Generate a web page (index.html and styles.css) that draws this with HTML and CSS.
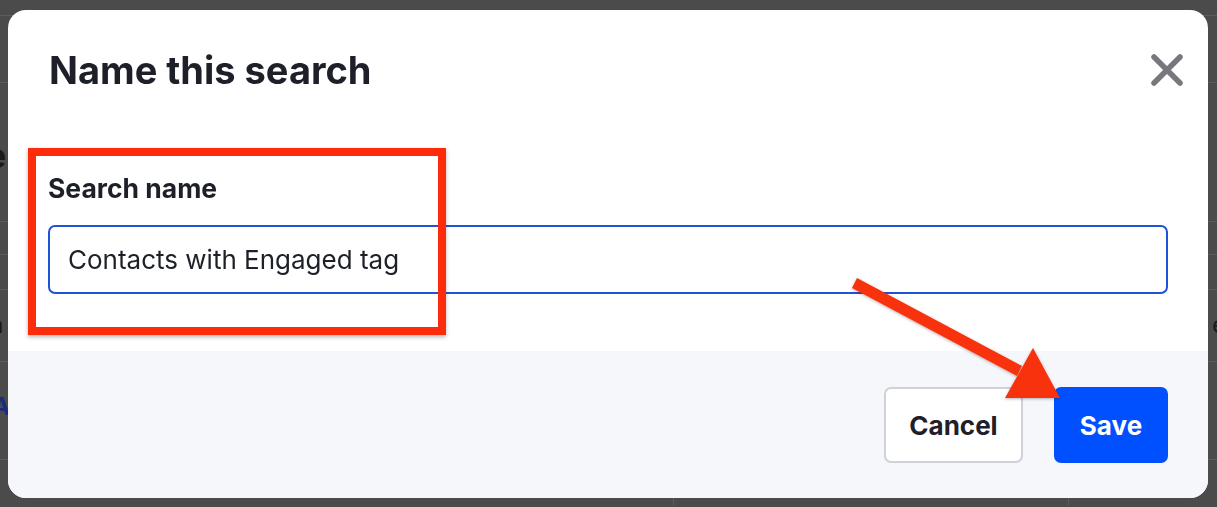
FILE: index.html
```html
<!DOCTYPE html>
<html lang="en">
<head>
    <meta charset="UTF-8">
    <title>Name this search</title>
    <link rel="stylesheet" href="styles.css">
</head>
<body>
    <div class="page">
        <div class="row r1"></div>
        <div class="row r2"></div>
        <div class="row r3"><span class="edge-l big">e</span></div>
        <div class="row r4"></div>
        <div class="row r5"></div>
        <div class="row r6"><span class="edge-l">a</span><span class="edge-r">e</span></div>
        <div class="row r7"><span class="edge-l link">A</span></div>
        <div class="row r8"><span class="col c1"></span><span class="col c2"></span></div>
    </div>

    <div class="modal">
        <div class="modal-head">
            <h2>Name this search</h2>
            <button class="close" aria-label="Close">
                <svg width="34" height="34" viewBox="0 0 34 34">
                    <path d="M4 4 L30 30 M30 4 L4 30" stroke="#77787d" stroke-width="5.5" stroke-linecap="round" fill="none"/>
                </svg>
            </button>
        </div>
        <div class="modal-body">
            <label for="searchName">Search name</label>
            <input id="searchName" type="text" value="Contacts with Engaged tag">
        </div>
        <div class="modal-foot">
            <button class="btn btn-cancel">Cancel</button>
            <button class="btn btn-save">Save</button>
        </div>

        <!-- annotations drawn over the dialog -->
        <div class="mark-box"></div>
        <svg class="mark-arrow" width="1200" height="488" viewBox="0 0 1200 488">
            <defs>
                <filter id="shadow" x="-10%" y="-10%" width="120%" height="120%">
                    <feDropShadow dx="0" dy="1" stdDeviation="1.5" flood-color="#000" flood-opacity="0.3"/>
                </filter>
            </defs>
            <g filter="url(#shadow)" fill="#f8300f">
                <path d="M849 268 L1014 356 L1009 366 L844 278 Z"/>
                <path d="M1052 388 L997 388 L1025 338 Z"/>
            </g>
        </svg>
    </div>
</body>
</html>
```

FILE: styles.css
```css
body {
    margin: 0;
    background: #4b4b4c;
    font-family: Inter, "Open Sans", sans-serif;
    overflow: hidden;
}

.page {
    height: 507px;
}

.row {
    position: relative;
    border-bottom: 1px solid #5c5c5e;
    color: #1a1a1a;
}

.r1 { height: 15px; }
.r2 { height: 66px; }
.r3 { height: 138px; }
.r4 { height: 32px; }
.r5 { height: 34px; }
.r6 { height: 71px; }
.r7 { height: 97px; }
.r8 { height: 46px; border-bottom: none; }

.edge-l, .edge-r {
    position: absolute;
    font-size: 24px;
}

.edge-l { left: -10px; }
.edge-r { right: -9px; }

.r3 .edge-l { top: 52px; left: -14px; font-size: 34px; font-weight: 700; }
.r6 .edge-l, .r6 .edge-r { top: 20px; }
.r7 .edge-l { top: 30px; font-weight: 700; color: #1b2a7a; left: -8px; }

.col {
    position: absolute;
    top: 0;
    bottom: 0;
    border-left: 1px solid #5c5c5e;
}

.c1 { left: 673px; }
.c2 { left: 1068px; }

.modal {
    position: fixed;
    left: 8px;
    top: 10px;
    width: 1200px;
    height: 488px;
    background: #fff;
    border-radius: 18px;
    display: flex;
    flex-direction: column;
    overflow: hidden;
}

.modal-head {
    display: flex;
    justify-content: space-between;
    align-items: center;
    padding: 37px 24px 0 41px;
}

.modal-head h2 {
    margin: 0;
    font-size: 38px;
    font-weight: 700;
    color: #1e2029;
}

.close {
    background: none;
    border: none;
    padding: 0;
    width: 34px;
    height: 34px;
}

.modal-body {
    flex: 1;
    display: flex;
    flex-direction: column;
    padding: 79px 40px 0 40px;
}

.modal-body label {
    font-size: 26.5px;
    font-weight: 700;
    color: #1e2029;
    margin-bottom: 21px;
}

.modal-body input {
    height: 69px;
    box-sizing: border-box;
    border: 2px solid #1f52d6;
    border-radius: 7px;
    padding: 0 18px;
    font-family: inherit;
    font-size: 26px;
    color: #1e2029;
    outline: none;
}

.modal-foot {
    height: 147px;
    box-sizing: border-box;
    background: #f6f7fb;
    display: flex;
    justify-content: flex-end;
    align-items: flex-start;
    gap: 31px;
    padding: 36px 40px 0 0;
}

.btn {
    height: 76px;
    border-radius: 7px;
    font-family: inherit;
    font-size: 26px;
    font-weight: 700;
    cursor: pointer;
}

.btn-cancel {
    width: 139px;
    background: #fff;
    color: #1e2029;
    border: 2px solid #cfd1d8;
}

.btn-save {
    width: 114px;
    background: #0050ff;
    color: #fff;
    border: none;
}

.mark-box {
    position: absolute;
    left: 20px;
    top: 138px;
    width: 418px;
    height: 187px;
    box-sizing: border-box;
    border: 8px solid #fb2b0b;
    box-shadow: 0 2px 4px rgba(0, 0, 0, 0.3);
}

.mark-arrow {
    position: absolute;
    left: 0;
    top: 0;
    pointer-events: none;
}
```
